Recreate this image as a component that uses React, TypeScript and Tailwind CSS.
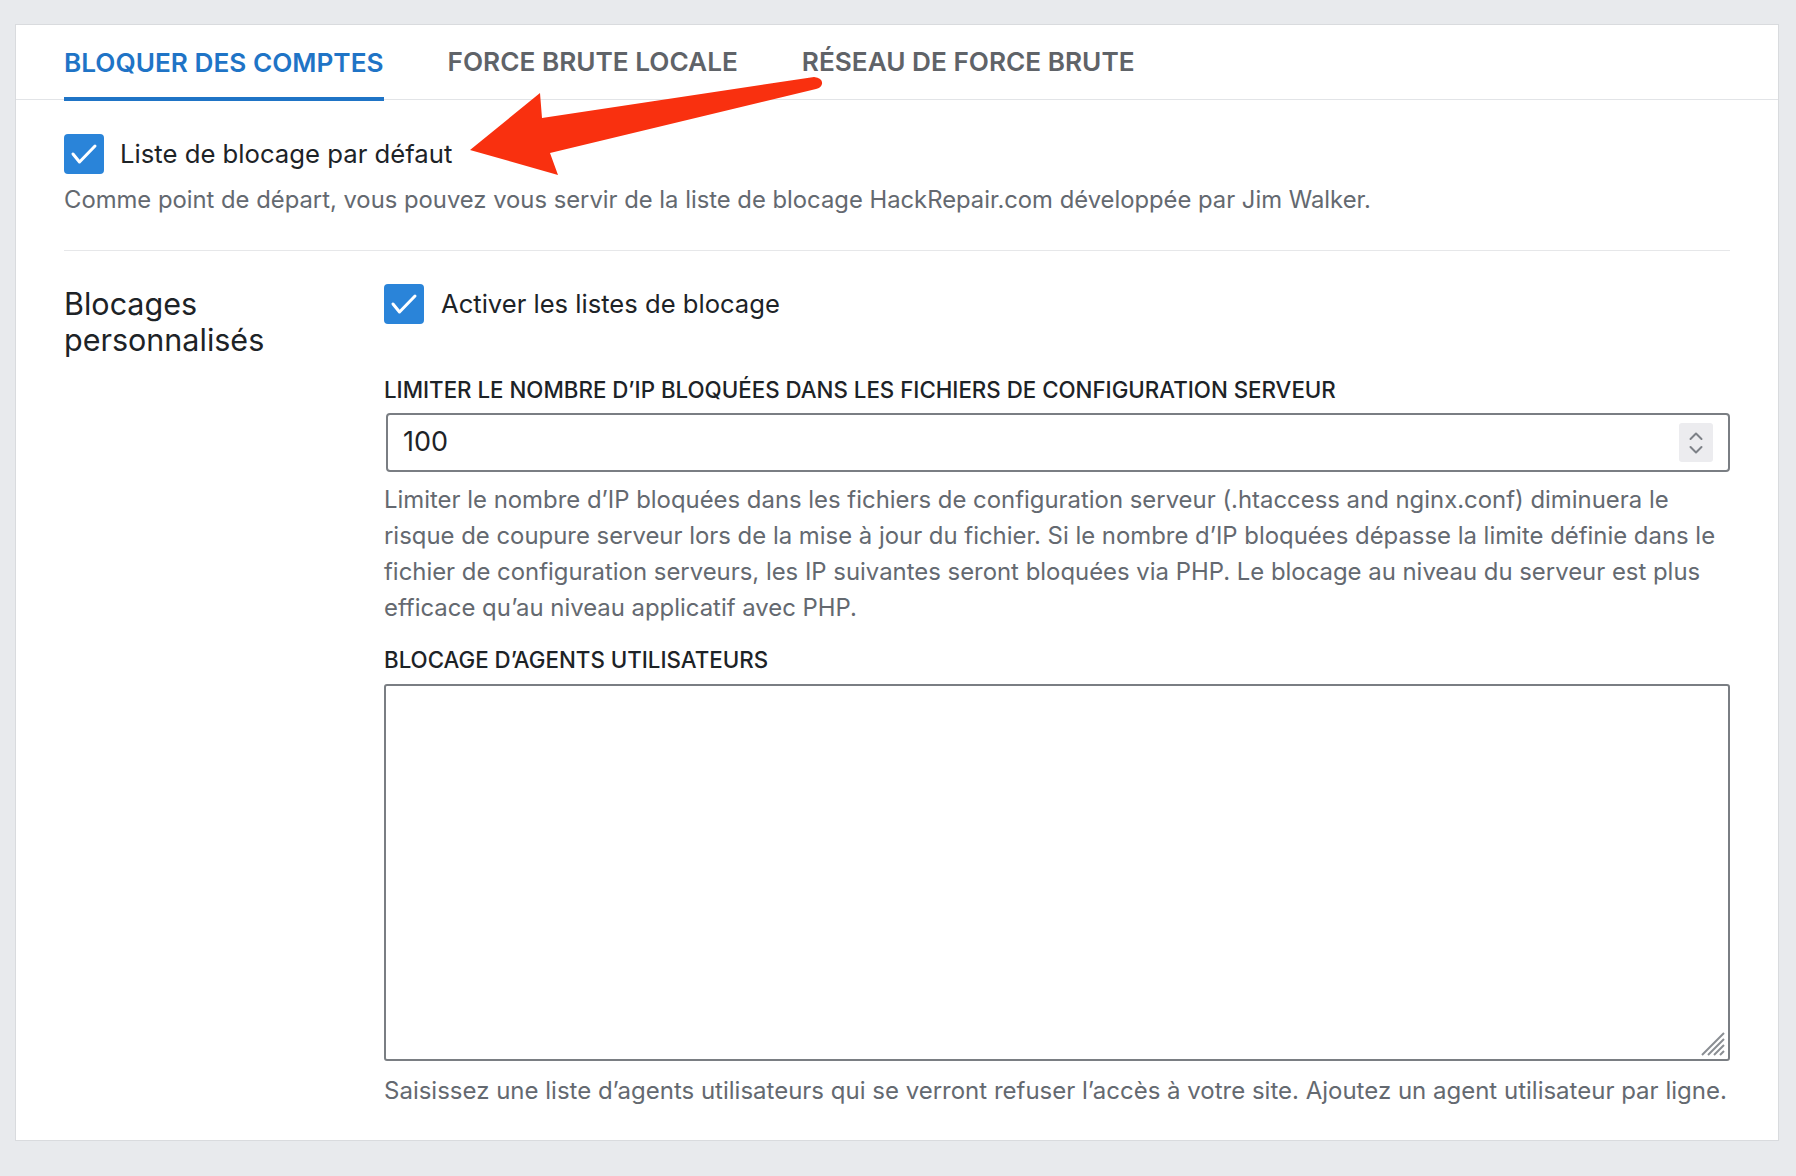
import React from "react";

function Check() {
  return (
    <span className="flex h-[40px] w-[40px] shrink-0 items-center justify-center rounded-[4px] bg-[#2a84d9]">
      <svg width="40" height="40" viewBox="0 0 40 40" fill="none">
        <path d="M9 20 L15.5 28 L31 12" stroke="#ffffff" strokeWidth="3" strokeLinecap="round" strokeLinejoin="round" />
      </svg>
    </span>
  );
}

export default function App() {
  return (
    <div className="relative h-[1176px] w-full bg-[#e8eaed] pl-[15px] pr-[17px] pt-[24px] font-['Inter','Noto_Sans',sans-serif] text-[#1d2327]">
      <div className="flex h-[1117px] flex-col border border-[#d9dbde] bg-white">
        {/* Tabs */}
        <div className="flex h-[75px] items-stretch gap-[64px] border-b border-[#e2e4e7] pl-[48px]">
          <div className="mb-[-2px] flex items-center border-b-[4px] border-[#1f74c6] pt-[4px] text-[26.2px] font-semibold text-[#1f74c6]">
            BLOQUER DES COMPTES
          </div>
          <div className="flex items-center text-[26.2px] font-semibold text-[#5f6368]">
            FORCE BRUTE LOCALE
          </div>
          <div className="flex items-center text-[26.2px] font-semibold text-[#5f6368]">
            RÉSEAU DE FORCE BRUTE
          </div>
        </div>

        <div className="flex flex-col px-[48px]">
          {/* Default list */}
          <div className="mt-[34px] flex items-center gap-[16px]">
            <Check />
            <span className="text-[25.7px] leading-[40px]">Liste de blocage par défaut</span>
          </div>
          <p className="mt-[8px] whitespace-nowrap text-[23.8px] leading-[36px] text-[#646970]">
            Comme point de départ, vous pouvez vous servir de la liste de blocage HackRepair.com développée par Jim Walker.
          </p>
          <div className="mt-[32px] h-px bg-[#e6e7e9]" />

          {/* Custom */}
          <div className="mt-[33px] flex">
            <div className="w-[320px] shrink-0 pt-[2px] text-[30.5px] leading-[36px]">
              Blocages
              <br />
              personnalisés
            </div>
            <div className="flex min-w-0 flex-1 flex-col">
              <div className="flex items-center gap-[17px]">
                <Check />
                <span className="text-[25.6px] leading-[40px]">Activer les listes de blocage</span>
              </div>

              <div className="mt-[52px] whitespace-nowrap text-[22.3px] font-medium leading-[28px] text-[#1d2327]">
                LIMITER LE NOMBRE D’IP BLOQUÉES DANS LES FICHIERS DE CONFIGURATION SERVEUR
              </div>
              <div className="mt-[9px] ml-[2px] flex h-[59px] items-center rounded-[4px] border-[2px] border-[#7a7e83] pl-[15px] pr-[15px]">
                <input
                  type="text"
                  defaultValue="100"
                  className="min-w-0 flex-1 bg-transparent text-[27px] text-[#1d2327] outline-none"
                />
                <div className="flex h-[39px] w-[34px] flex-col items-center justify-center rounded-[3px] bg-[#ececef]">
                  <svg width="18" height="28" viewBox="0 0 18 28" fill="none">
                    <path d="M3.5 10 L9 4.5 L14.5 10" stroke="#7d8187" strokeWidth="2" strokeLinecap="round" strokeLinejoin="round" />
                    <path d="M3.5 18 L9 23.5 L14.5 18" stroke="#7d8187" strokeWidth="2" strokeLinecap="round" strokeLinejoin="round" />
                  </svg>
                </div>
              </div>
              <p className="mt-[10px] whitespace-nowrap text-[23.9px] leading-[36px] text-[#646970]">
                Limiter le nombre d’IP bloquées dans les fichiers de configuration serveur (.htaccess and nginx.conf) diminuera le
                <br />
                risque de coupure serveur lors de la mise à jour du fichier. Si le nombre d’IP bloquées dépasse la limite définie dans le
                <br />
                fichier de configuration serveurs, les IP suivantes seront bloquées via PHP. Le blocage au niveau du serveur est plus
                <br />
                efficace qu’au niveau applicatif avec PHP.
              </p>

              <div className="mt-[20px] text-[22.3px] font-medium leading-[28px] text-[#1d2327]">
                BLOCAGE D’AGENTS UTILISATEURS
              </div>
              <div className="relative mt-[10px]">
                <textarea className="block h-[377px] w-full resize-none rounded-[3px] border-[2px] border-[#7a7e83] bg-white outline-none" />
                <svg className="absolute bottom-[4px] right-[4px]" width="26" height="26" viewBox="0 0 26 26" fill="none">
                  <path d="M24 2 L2 24 M24 8 L8 24 M24 14 L14 24 M24 20 L20 24" stroke="#8a8e93" strokeWidth="2" />
                </svg>
              </div>
              <p className="mt-[12px] whitespace-nowrap text-[24px] leading-[36px] text-[#646970]">
                Saisissez une liste d’agents utilisateurs qui se verront refuser l’accès à votre site. Ajoutez un agent utilisateur par ligne.
              </p>
            </div>
          </div>
        </div>
      </div>

      {/* Annotation arrow */}
      <svg className="pointer-events-none absolute left-0 top-0" width="1796" height="1176" viewBox="0 0 1796 1176">
        <path
          d="M470 150 L540 93 L542 118 L814 77 Q823 78 822 84 Q821 88 816 89 L550 153 L558 175 Z"
          fill="#f9300f"
        />
      </svg>
    </div>
  );
}
